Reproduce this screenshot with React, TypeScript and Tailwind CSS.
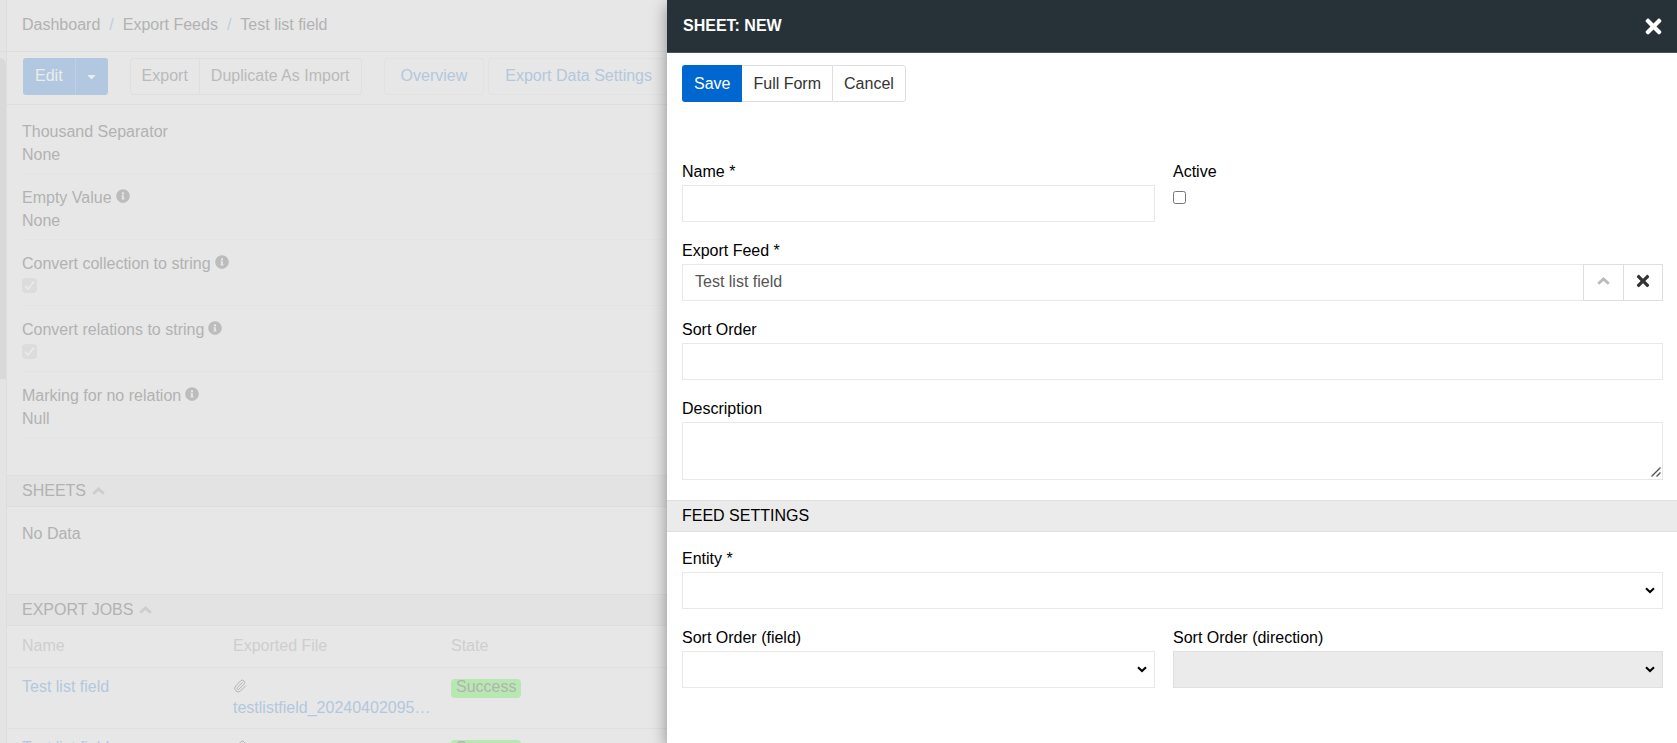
import React from "react";
import { FaCaretDown, FaInfoCircle, FaTimes } from "react-icons/fa";
import { Paperclip } from "lucide-react";

interface DetailField {
  label: string;
  value?: string;
  checked?: boolean;
  hint?: boolean;
}

const detailFields: DetailField[] = [
  { label: "Thousand Separator", value: "None" },
  { label: "Empty Value", value: "None", hint: true },
  { label: "Convert collection to string", checked: true, hint: true },
  { label: "Convert relations to string", checked: true, hint: true },
  { label: "Marking for no relation", value: "Null", hint: true },
];

const exportJobs = [
  { name: "Test list field", file: "testlistfield_20240402095512.csv", state: "Success" },
  { name: "Test list field", file: "testlistfield_20240402095237.csv", state: "Success" },
];

const inputClass = "block h-[37px] w-full border border-[#e8e8e8] bg-white px-3 pb-0.5 text-[#555]";

function ChevronUp({ className }: { className?: string }) {
  return (
    <svg className={className} width="13" height="8" viewBox="0 0 13 8" fill="none">
      <path d="M1.2 6.8 6.5 1.9l5.3 4.9" stroke="currentColor" strokeWidth="2.8" />
    </svg>
  );
}

function PanelHeading({ title }: { title: string }) {
  return (
    <div className="flex h-8 items-center gap-1.5 border-y border-[#dedede] bg-[#e3e3e3] pl-[15px]">
      <h2>{title}</h2>
      <ChevronUp className="text-[#cdcdcd]" />
    </div>
  );
}

function DetailRow({ field }: { field: DetailField }) {
  return (
    <div className="mx-[15px] h-[66px] border-b border-[#e4e4e4] pt-3">
      <div className="flex items-center gap-1">
        <span>{field.label}</span>
        {field.hint && <FaInfoCircle size={14} className="mb-1 text-[#bcbcbc]" />}
      </div>
      {field.checked ? (
        <div className="mt-0.5 flex h-[15px] w-[15px] items-center justify-center rounded-sm bg-[#dcdcdc]">
          <input type="checkbox" aria-label={field.label} checked disabled className="sr-only" />
          <svg width="11" height="11" viewBox="0 0 11 11" fill="none">
            <path d="M1 6l3 3 6-7.5" stroke="#e9e9e9" strokeWidth="2" />
          </svg>
        </div>
      ) : (
        <div className="leading-[22px]">{field.value}</div>
      )}
    </div>
  );
}

function Field({
  id,
  label,
  children,
}: {
  id: string;
  label: string;
  children: React.ReactNode;
}) {
  return (
    <div>
      <label htmlFor={id} className="block py-px">
        {label}
      </label>
      {children}
    </div>
  );
}

function Select({ id, disabled }: { id: string; disabled?: boolean }) {
  return (
    <div className="relative">
      <select
        id={id}
        disabled={disabled}
        className="block h-[37px] w-full appearance-none border border-[#e8e8e8] bg-white px-3 disabled:border-[#dfdfdf] disabled:bg-[#ebebeb]"
      />
      <svg
        className="pointer-events-none absolute top-[15px] right-2"
        width="10"
        height="7"
        viewBox="0 0 10 7"
        fill="none"
      >
        <path d="M1 1.2 5 5l4-3.8" stroke="#000" strokeWidth="2" />
      </svg>
    </div>
  );
}

function FeedPage() {
  return (
    <div className="flex h-full text-[#b2b2b2]">
      <div className="w-[7px] shrink-0 border-r border-[#dedede] bg-[#e4e4e4]">
        <div className="h-[52px] border-b border-[#dedede]" />
        <div className="mt-1.5 h-[321px] rounded-tr-md bg-[#d9d9d9]" />
      </div>
      <main className="min-w-0 flex-1">
        <nav className="flex h-[52px] items-center gap-[9px] border-b border-[#dedede] px-[15px] pb-0.5">
          <a href="#">Dashboard</a>
          <span className="text-[#b9cfdf]">/</span>
          <a href="#">Export Feeds</a>
          <span className="text-[#b9cfdf]">/</span>
          <span>Test list field</span>
        </nav>
        <div className="flex h-[53px] items-start border-b border-[#dedede] px-4 pt-1.5">
          <div className="flex h-[37px] overflow-hidden rounded-[3px] bg-[#b2c8e0] text-[#ececec]">
            <button className="border-r border-[#c0d0e2] px-3 pb-0.5">Edit</button>
            <button className="flex w-8 items-center justify-center" aria-label="More actions">
              <FaCaretDown size={13} />
            </button>
          </div>
          <div className="ml-[22px] flex h-[37px] rounded-[3px] border border-[#dfdfdf] text-[#bababa]">
            <button className="border-r border-[#dfdfdf] px-[11px] pb-0.5">Export</button>
            <button className="px-[11px] pb-0.5">Duplicate As Import</button>
          </div>
          <div className="ml-[22px] flex gap-1 text-[#b3c7de]">
            <button className="h-[37px] rounded-[3px] border border-[#e2e2e2] px-4 pb-0.5">Overview</button>
            <button className="h-[37px] rounded-[3px] border border-[#e2e2e2] px-4 pb-0.5">
              Export Data Settings
            </button>
          </div>
        </div>

        <div className="pt-[3px] pb-[37px]">
          {detailFields.map((field) => (
            <DetailRow key={field.label} field={field} />
          ))}
        </div>

        <PanelHeading title="SHEETS" />
        <div className="h-[87px] px-[15px] pt-[15px]">No Data</div>

        <PanelHeading title="EXPORT JOBS" />
        <table className="w-full table-fixed text-left">
          <colgroup>
            <col className="w-[218px]" />
            <col className="w-[218px]" />
            <col />
          </colgroup>
          <thead>
            <tr className="h-[41px] border-b border-[#e0e0e0] text-[#cecece]">
              <th className="pl-[15px] font-normal">Name</th>
              <th className="pl-2 font-normal">Exported File</th>
              <th className="pl-2 font-normal">State</th>
            </tr>
          </thead>
          <tbody className="leading-[21px]">
            {exportJobs.map((job, index) => (
              <tr key={index} className="h-[61px] border-b border-[#dfdfdf] align-top">
                <td className="pt-2 pl-[15px]">
                  <a href="#" className="text-[#b3c7de]">
                    {job.name}
                  </a>
                </td>
                <td className="pt-2 pr-1 pl-2">
                  <div className="flex h-[21px] items-center">
                    <Paperclip size={14} strokeWidth={1.7} />
                  </div>
                  <a href="#" className="block truncate text-[#b3c7de]">
                    {job.file}
                  </a>
                </td>
                <td className="pt-[11px] pl-2">
                  <span className="inline-block h-[19px] rounded bg-[#b8e8b1] px-[5px] align-top leading-4">
                    {job.state}
                  </span>
                </td>
              </tr>
            ))}
          </tbody>
        </table>
      </main>
    </div>
  );
}

function SheetDrawer() {
  return (
    <section className="absolute inset-y-0 right-0 w-3/5 min-w-[1010px] bg-white text-black shadow-[0_5px_15px_rgba(0,0,0,0.4)]">
      <header className="flex h-[53px] items-center justify-between border-b border-[#4a555b] bg-[#263238] pr-3 pl-4 text-white">
        <h1 className="font-bold">SHEET: NEW</h1>
        <button aria-label="Close">
          <FaTimes size={23} />
        </button>
      </header>

      <form>
        <div className="flex px-[15px] pt-3 text-[#333]">
          <button type="button" className="h-[37px] rounded-l-[3px] bg-[#0066d0] px-3 text-white">
            Save
          </button>
          <button type="button" className="h-[37px] border-y border-[#dedede] px-[11px]">
            Full Form
          </button>
          <button type="button" className="h-[37px] rounded-r-[3px] border border-[#dedede] px-[11px]">
            Cancel
          </button>
        </div>

        <div className="mt-[57px] flex flex-col gap-4 pr-[14px] pb-5 pl-[15px]">
          <div className="grid grid-cols-[473fr_490fr] gap-[18px]">
            <Field id="name" label="Name *">
              <input id="name" type="text" className={inputClass} />
            </Field>
            <Field id="active" label="Active">
              <input id="active" type="checkbox" className="mt-1.5 block h-[13px] w-[13px]" />
            </Field>
          </div>
          <Field id="feed" label="Export Feed *">
            <div className="flex">
              <input id="feed" type="text" defaultValue="Test list field" className={inputClass} />
              <button
                type="button"
                aria-label="Select"
                className="-ml-px flex w-[41px] shrink-0 items-center justify-center border border-[#dedede] pb-1 text-[#bbb]"
              >
                <ChevronUp />
              </button>
              <button
                type="button"
                aria-label="Clear"
                className="-ml-px flex w-10 shrink-0 items-center justify-center border border-[#dedede] pb-1 text-[#333]"
              >
                <FaTimes size={18} />
              </button>
            </div>
          </Field>
          <Field id="sortOrder" label="Sort Order">
            <input id="sortOrder" type="text" className={inputClass} />
          </Field>
          <Field id="description" label="Description">
            <div className="relative">
              <textarea
                id="description"
                className="block h-[58px] w-full resize-none border border-[#e8e8e8] px-3 py-1.5"
              />
              <svg
                className="pointer-events-none absolute right-0.5 bottom-[3px]"
                width="10"
                height="10"
                viewBox="0 0 10 10"
              >
                <path d="M.5 9.5l9-9M5.5 9.5l4-4" stroke="#555" strokeWidth="1.4" />
              </svg>
            </div>
          </Field>
        </div>

        <div className="flex h-8 items-center border-y border-[#dedede] bg-[#ebebeb] pl-[15px]">
          <h2>FEED SETTINGS</h2>
        </div>

        <div className="flex flex-col gap-4 pt-[14px] pr-[14px] pl-[15px]">
          <Field id="entity" label="Entity *">
            <Select id="entity" />
          </Field>
          <div className="grid grid-cols-[473fr_490fr] gap-[18px]">
            <Field id="sortField" label="Sort Order (field)">
              <Select id="sortField" />
            </Field>
            <Field id="sortDirection" label="Sort Order (direction)">
              <Select id="sortDirection" disabled />
            </Field>
          </div>
        </div>
      </form>
    </section>
  );
}

function App() {
  return (
    <div className="relative h-screen overflow-hidden bg-[#e7e7e7] font-['Liberation_Sans',Arial,sans-serif] text-base">
      <FeedPage />
      <SheetDrawer />
    </div>
  );
}

export default App;
